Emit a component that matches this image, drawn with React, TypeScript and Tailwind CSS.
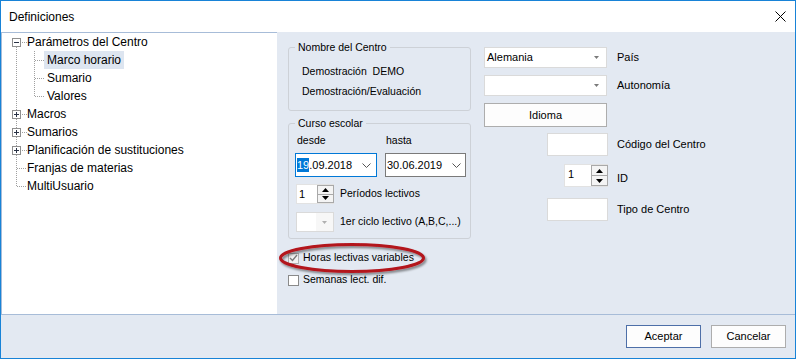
import React from "react";

const BG = "bg-[#e3e9f2]";

function Chevron() {
  return (
    <svg width="9" height="5" viewBox="0 0 9 5" className="block">
      <polyline points="0.5,0.5 4.5,4.5 8.5,0.5" fill="none" stroke="#555" strokeWidth="1" />
    </svg>
  );
}

function SmallArrow({ color = "#7a7a7a" }: { color?: string }) {
  return (
    <svg width="5" height="3" viewBox="0 0 5 3" className="block">
      <polygon points="0,0 5,0 2.5,3" fill={color} />
    </svg>
  );
}

function SpinButtons({ h }: { h: number }) {
  return (
    <div className="flex flex-col w-[17px] h-full">
      <div className="flex-1 border border-[#a9a9a9] bg-[#f4f4f4] flex items-center justify-center">
        <svg width="7" height="4" viewBox="0 0 7 4" className="block">
          <polygon points="0,4 7,4 3.5,0" fill="#000" />
        </svg>
      </div>
      <div className="flex-1 border border-t-0 border-[#a9a9a9] bg-[#f4f4f4] flex items-center justify-center">
        <svg width="7" height="4" viewBox="0 0 7 4" className="block">
          <polygon points="0,0 7,0 3.5,4" fill="#000" />
        </svg>
      </div>
    </div>
  );
}

function TreeLines() {
  const centers = [9, 27, 45, 63, 81, 99, 117, 135, 153];
  const boxed: Record<number, "minus" | "plus"> = { 0: "minus", 4: "plus", 5: "plus", 6: "plus" };
  const dot = { stroke: "#a0a0a0", strokeWidth: 1, strokeDasharray: "1 1", shapeRendering: "crispEdges" as const };
  return (
    <svg width="60" height="170" className="absolute left-0 top-0" viewBox="0 0 60 170">
      <line x1="14.5" y1="14" x2="14.5" y2="153" {...dot} />
      <line x1="32.5" y1="18" x2="32.5" y2="63" {...dot} />
      {[27, 45, 63].map((c) => (
        <line key={c} x1="33" y1={c + 0.5} x2="42" y2={c + 0.5} {...dot} />
      ))}
      {centers.map((c, i) =>
        boxed[i] ? (
          <line key={"h" + i} x1="20" y1={c + 0.5} x2="25" y2={c + 0.5} {...dot} />
        ) : i <= 3 && i > 0 ? null : (
          <line key={"h" + i} x1="15" y1={c + 0.5} x2="25" y2={c + 0.5} {...dot} />
        )
      )}
      {centers.map((c, i) =>
        boxed[i] ? (
          <g key={"b" + i} shapeRendering="crispEdges">
            <rect x="10.5" y={c - 3.5} width="8" height="8" fill="#fff" stroke="#8f8f8f" />
            <line x1="12" y1={c + 0.5} x2="17" y2={c + 0.5} stroke="#2a3346" />
            {boxed[i] === "plus" && <line x1="14.5" y1={c - 2} x2="14.5" y2={c + 3} stroke="#2a3346" />}
          </g>
        ) : null
      )}
    </svg>
  );
}

function Tree() {
  const l0 = "h-[18px] leading-[18px] pl-[25px] whitespace-nowrap";
  const l1 = "h-[18px] leading-[18px] pl-[42px] whitespace-nowrap";
  return (
    <div className="w-[276px] bg-white border-l border-t border-[#a7bcd8] relative text-[12px] text-black" style={{ fontFamily: '"Liberation Sans", Arial, sans-serif' }}>
      <TreeLines />
      <div className={l0}>Parámetros del Centro</div>
      <div className={l1}>
        <span className="inline-block h-[18px] px-[3px] bg-[#dde5f0]">Marco horario</span>
      </div>
      <div className={l1}><span className="px-[3px]">Sumario</span></div>
      <div className={l1}><span className="px-[3px]">Valores</span></div>
      <div className={l0}>Macros</div>
      <div className={l0}>Sumarios</div>
      <div className={l0}>Planificación de sustituciones</div>
      <div className={l0}>Franjas de materias</div>
      <div className={l0}>MultiUsuario</div>
    </div>
  );
}

function Group({ title, className, children }: { title: string; className: string; children: React.ReactNode }) {
  return (
    <div className={"relative border border-[#cdd1d7] rounded-[3px] " + className}>
      <span className={"absolute -top-[7px] left-[6px] px-[3px] leading-[12px] " + BG}>{title}</span>
      {children}
    </div>
  );
}

function RightPane() {
  return (
    <div className="flex-1 relative flex pl-[11px] text-[10.5px] text-black" style={{ fontFamily: '"Liberation Sans", Arial, sans-serif' }}>
      <div className="w-[183px] flex flex-col pt-[15px]">
        <Group title="Nombre del Centro" className="h-[64px] pt-[13px] pl-[13px]">
          <div className="h-[20px] leading-[20px] whitespace-pre">Demostración  DEMO</div>
          <div className="h-[20px] leading-[20px]">Demostración/Evaluación</div>
        </Group>
        <Group title="Curso escolar" className="mt-[12px] h-[116px] pt-[9px] pl-[6px]">
          <div className="grid grid-cols-[82px_81px] gap-x-[8px]">
            <div className="h-[14px] leading-[14px] pl-[2px]">desde</div>
            <div className="h-[14px] leading-[14px] pl-[1px]">hasta</div>
            <div className="mt-[6px] h-[24px] bg-white border border-[#0078d7] flex items-center pl-[1px] pr-[5px] text-[11px]">
              <span className="bg-[#0078d7] text-white leading-[14px]">19</span>
              <span className="leading-[14px]">.09.2018</span>
              <span className="ml-auto"><Chevron /></span>
            </div>
            <div className="mt-[6px] h-[24px] bg-white border border-[#7a7a7a] flex items-center pl-[1px] pr-[4px] text-[11px]">
              <span className="leading-[14px]">30.06.2019</span>
              <span className="ml-auto"><Chevron /></span>
            </div>
          </div>
          <div className="mt-[7px] flex items-center h-[20px]">
            <div className="ml-[1px] w-[38px] h-[20px] flex bg-white border-l border-y border-[#e2e2e2]">
              <div className="flex-1 pl-[2px] leading-[18px] text-[11px]">1</div>
              <SpinButtons h={20} />
            </div>
            <span className="ml-[6px]">Períodos lectivos</span>
          </div>
          <div className="mt-[8px] flex items-center h-[20px]">
            <div className="ml-[1px] w-[38px] h-[20px] flex bg-white border border-[#dadada]">
              <div className="w-[19px] bg-white" />
              <div className="flex-1 bg-[#f7f7f7] flex items-center justify-center">
                <SmallArrow color="#b0b0b0" />
              </div>
            </div>
            <span className="ml-[6px]">1er ciclo lectivo (A,B,C,...)</span>
          </div>
        </Group>
        <div className="mt-[11px] h-[16px] flex items-center">
          <div className="w-[11px] h-[11px] border border-[#b0b0b0] bg-[#f2f2f2] flex items-center justify-center">
            <svg width="9" height="8" viewBox="0 0 9 8" className="block">
              <polyline points="1,4 3.5,6.5 8,1" fill="none" stroke="#7a7a7a" strokeWidth="1.4" />
            </svg>
          </div>
          <span className="ml-[4px]">Horas lectivas variables</span>
        </div>
        <div className="mt-[6px] h-[16px] flex items-center">
          <div className="w-[11px] h-[11px] border border-[#8a8a8a] bg-white" />
          <span className="ml-[4px]">Semanas lect. dif.</span>
        </div>
      </div>

      <div className="ml-[13px] flex flex-col pt-[15px]">
        <div className="flex items-center h-[21px]">
          <div className="w-[124px]">
            <div className="w-[123px] h-[21px] bg-white border border-[#dadada] flex items-center pl-[2px] pr-[7px] text-[11px]">
              <span>Alemania</span>
              <span className="ml-auto"><SmallArrow /></span>
            </div>
          </div>
          <span className="pl-[9px] text-[11px]">País</span>
        </div>
        <div className="mt-[7px] flex items-center h-[21px]">
          <div className="w-[124px]">
            <div className="w-[123px] h-[21px] bg-white border border-[#dadada] flex items-center pl-[2px] pr-[7px]">
              <span className="ml-auto"><SmallArrow /></span>
            </div>
          </div>
          <span className="pl-[9px] text-[11px]">Autonomía</span>
        </div>
        <div className="mt-[7px] flex items-center h-[24px]">
          <div className="w-[123px] h-[24px] bg-[#fdfdfd] border border-[#adadad] flex items-center justify-center text-[11px]">
            Idioma
          </div>
        </div>
        <div className="mt-[6px] flex items-center h-[23px]">
          <div className="w-[124px] flex justify-end">
            <div className="w-[61px] h-[23px] bg-white border border-[#dadada]" />
          </div>
          <span className="pl-[9px] text-[11px]">Código del Centro</span>
        </div>
        <div className="mt-[8px] flex items-center h-[23px]">
          <div className="w-[124px] flex justify-end">
            <div className="w-[44px] h-[23px] flex bg-white border-l border-y border-[#e2e2e2]">
              <div className="flex-1 pl-[3px] leading-[19px] text-[11px]">1</div>
              <SpinButtons h={23} />
            </div>
          </div>
          <span className="pl-[9px] pt-[5px] text-[11px]">ID</span>
        </div>
        <div className="mt-[11px] flex items-center h-[23px]">
          <div className="w-[124px] flex justify-end">
            <div className="w-[61px] h-[23px] bg-white border border-[#dadada]" />
          </div>
          <span className="pl-[9px] text-[11px]">Tipo de Centro</span>
        </div>
      </div>

      <svg width="152" height="36" viewBox="0 0 152 36" className="absolute left-[1px] top-[210px] pointer-events-none">
        <defs>
          <filter id="sh" x="-10%" y="-30%" width="120%" height="160%">
            <feDropShadow dx="1.5" dy="2" stdDeviation="1.2" floodColor="#000" floodOpacity="0.45" />
          </filter>
        </defs>
        <ellipse cx="74" cy="16" rx="71.5" ry="13.5" fill="none" stroke="#b3141c" strokeWidth="3" filter="url(#sh)" />
      </svg>
    </div>
  );
}

export default function App() {
  return (
    <div className={"w-[796px] h-[359px] border border-[#1883d7] flex flex-col overflow-hidden " + BG}>
      <div className="h-[31px] bg-white flex items-center pl-[8px] pr-[9px] text-[12px] text-black" style={{ fontFamily: '"Liberation Sans", Arial, sans-serif' }}>
        <span>Definiciones</span>
        <svg width="11" height="11" viewBox="0 0 11 11" className="ml-auto block">
          <line x1="0.5" y1="0.5" x2="10.5" y2="10.5" stroke="#000" strokeWidth="1" />
          <line x1="10.5" y1="0.5" x2="0.5" y2="10.5" stroke="#000" strokeWidth="1" />
        </svg>
      </div>
      <div className="h-[282px] flex">
        <Tree />
        <RightPane />
      </div>
      <div className="h-px bg-[#a7bcd8]" />
      <div className="h-[43px] flex justify-end items-start pt-[10px] pr-[9px] gap-[10px] text-[11px] text-black" style={{ fontFamily: '"Liberation Sans", Arial, sans-serif' }}>
        <div className="w-[75px] h-[23px] bg-[#fdfdfd] border border-[#4d6fa8] flex items-center justify-center">Aceptar</div>
        <div className="w-[75px] h-[23px] bg-[#fdfdfd] border border-[#adadad] flex items-center justify-center">Cancelar</div>
      </div>
    </div>
  );
}
